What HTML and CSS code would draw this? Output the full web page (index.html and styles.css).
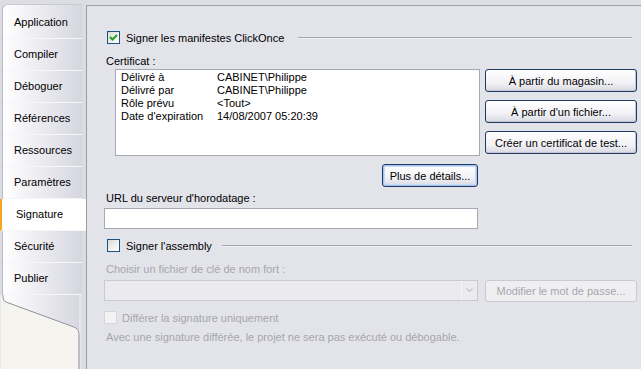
FILE: index.html
```html
<!DOCTYPE html>
<html lang="fr">
<head>
<meta charset="UTF-8">
<meta name="viewport" content="width=device-width, initial-scale=1.0">
<title>Signature</title>
<link rel="stylesheet" href="styles.css">
</head>
<body>
  <div class="window">
    <div class="sidebar">
      <ul class="tabs">
        <li>Application</li>
        <li>Compiler</li>
        <li>Déboguer</li>
        <li>Références</li>
        <li>Ressources</li>
        <li>Paramètres</li>
        <li class="active">Signature</li>
        <li>Sécurité</li>
        <li>Publier</li>
      </ul>
      <svg class="tail" width="81" height="75" viewBox="0 0 81 75">
        <defs>
          <linearGradient id="tabGrad" x1="0" x2="1" y1="0" y2="0">
            <stop offset="0" stop-color="#ffffff"/>
            <stop offset="1" stop-color="#d6d6e0"/>
          </linearGradient>
        </defs>
        <rect x="0" y="0" width="81" height="75" fill="#f5f4ef"/>
        <path d="M2 0 L80 0 L80 75 L80.5 75 L80.5 40 Q80 34 74 32 L6 7 Q2 6 2 3 Z" fill="url(#tabGrad)"/>
        <path d="M2.5 0 L2.5 3 Q2.5 6 6 7.3 L74 32.3 Q79.5 34 79.5 40 L79.5 75" fill="none" stroke="#8d8d9c" stroke-width="1"/>
      </svg>
    </div>

    <div class="panel">
      <div class="group-row first">
        <span class="check checked">
          <svg width="9" height="9" viewBox="0 0 9 9"><path d="M1 4 L3.5 6.5 L8 2" fill="none" stroke="#21a121" stroke-width="2"/></svg>
        </span>
        <span class="group-label">Signer les manifestes ClickOnce</span>
        <span class="rule"></span>
      </div>

      <div class="label cert-label">Certificat :</div>
      <div class="cert-area">
        <div class="cert-box">
          <div class="cert-row"><span class="key">Délivré à</span><span>CABINET\Philippe</span></div>
          <div class="cert-row"><span class="key">Délivré par</span><span>CABINET\Philippe</span></div>
          <div class="cert-row"><span class="key">Rôle prévu</span><span>&lt;Tout&gt;</span></div>
          <div class="cert-row"><span class="key">Date d'expiration</span><span>14/08/2007 05:20:39</span></div>
        </div>
        <div class="cert-buttons">
          <button class="btn">À partir du magasin...</button>
          <button class="btn">À partir d'un fichier...</button>
          <button class="btn">Créer un certificat de test...</button>
        </div>
      </div>

      <div class="details-row">
        <button class="btn focused details">Plus de détails...</button>
      </div>

      <div class="label url-label">URL du serveur d'horodatage :</div>
      <input class="text-input" type="text">

      <div class="group-row second">
        <span class="check"></span>
        <span class="group-label">Signer l'assembly</span>
        <span class="rule"></span>
      </div>

      <div class="label disabled key-label">Choisir un fichier de clé de nom fort :</div>
      <div class="key-row">
        <div class="combo">
          <span class="combo-arrow">
            <svg width="7" height="5" viewBox="0 0 7 5"><path d="M0.5 0.5 L3.5 3.5 L6.5 0.5" fill="none" stroke="#c4c4cc" stroke-width="1.2"/></svg>
          </span>
        </div>
        <button class="btn disabled-btn">Modifier le mot de passe...</button>
      </div>

      <div class="delay-row">
        <span class="check disabled-check"></span>
        <span class="disabled">Différer la signature uniquement</span>
      </div>
      <div class="label disabled note">Avec une signature différée, le projet ne sera pas exécuté ou débogable.</div>
    </div>
  </div>
</body>
</html>
```

FILE: styles.css
```css
body {
  margin: 0;
  font-family: "Liberation Sans", Tahoma, Arial, sans-serif;
  font-size: 11px;
  color: #000;
  background-color: #dedee5;
}

.window {
  display: flex;
  width: 641px;
  height: 369px;
  overflow: hidden;
}

.sidebar {
  width: 86px;
  flex-shrink: 0;
  display: flex;
  flex-direction: column;
  background-color: #dcdce3;
}

.tabs {
  list-style: none;
  margin: 4px 0 0 2px;
  padding: 2px 0 0 0;
  width: 79px;
  border-left: 1px solid #b9b9c6;
  border-top: 1px solid #c8c8d2;
  border-top-left-radius: 6px;
  background: linear-gradient(to right, #ffffff, #d6d6e0);
}

.tabs li {
  height: 31px;
  line-height: 31px;
  padding-left: 11px;
  border-bottom: 1px solid #f6f6fa;
}

.tabs li.active {
  background-color: #fff;
  margin-left: -3px;
  margin-right: -5px;
  padding-left: 14px;
  border-left: 2px solid #f5a623;
}

.tail {
  display: block;
}

.panel {
  width: 555px;
  min-width: 0;
  box-sizing: border-box;
  margin-top: 5px;
  border-top: 1px solid #9c9cab;
  border-left: 1px solid #9c9cab;
  background-color: #e3e3ea;
  padding: 0 4px 0 17px;
}

.group-row {
  display: flex;
  align-items: center;
  height: 13px;
}

.group-row.first {
  margin-top: 25px;
  padding-left: 3px;
}

.group-row.second {
  margin-top: 10px;
  padding-left: 3px;
}

.check {
  width: 11px;
  height: 11px;
  border: 1px solid #1c5180;
  background: linear-gradient(135deg, #dcdcd6, #ffffff);
  display: inline-flex;
  align-items: center;
  justify-content: center;
  flex-shrink: 0;
}

.group-label {
  margin-left: 6px;
  white-space: nowrap;
}

.rule {
  flex: 1;
  height: 0;
  border-top: 1px solid #a3a3b0;
  border-bottom: 1px solid #f4f4f8;
  margin-left: 14px;
  margin-right: 5px;
}

.group-row.second .rule {
  margin-left: 10px;
}

.label {
  padding-left: 2px;
  white-space: nowrap;
}

.cert-label {
  margin-top: 11px;
  line-height: 13px;
}

.cert-area {
  display: flex;
  margin-top: 1px;
}

.cert-box {
  width: 365px;
  height: 87px;
  flex-shrink: 0;
  margin-left: 11px;
  border: 1px solid #a6a9b3;
  background-color: #fff;
  padding: 1px 0 0 5px;
  box-sizing: border-box;
}

.cert-row {
  display: flex;
  line-height: 13px;
}

.cert-row .key {
  width: 96px;
}

.cert-buttons {
  display: flex;
  flex-direction: column;
  flex-shrink: 0;
  gap: 8px;
  margin-left: 5px;
}

.btn {
  font-family: inherit;
  font-size: 11px;
  color: #000;
  height: 23px;
  width: 152px;
  flex-shrink: 0;
  padding: 0;
  border: 1px solid #1f3b64;
  border-radius: 3px;
  background: linear-gradient(to bottom, #ffffff 0%, #f2f2f6 60%, #d8d8e2 100%);
  box-shadow: inset -1px -1px 0 #c6c6d2;
}

.btn.focused {
  box-shadow: inset 0 0 0 1px #a8c4f0, inset 0 0 0 2px #c9daf6;
}

.details-row {
  display: flex;
  justify-content: flex-end;
  width: 374px;
  margin-top: 8px;
}

.btn.details {
  width: 96px;
}

.url-label {
  margin-top: 5px;
  line-height: 13px;
}

.text-input {
  display: block;
  width: 374px;
  height: 21px;
  box-sizing: border-box;
  margin: 3px 0 0 0;
  border: 1px solid #a6a9b3;
  background-color: #fff;
}

.key-label {
  margin-top: 11px;
  line-height: 13px;
}

.disabled {
  color: #a7a6ad;
}

.key-row {
  display: flex;
  margin-top: 4px;
}

.combo {
  width: 374px;
  height: 21px;
  box-sizing: border-box;
  border: 1px solid #c9c9d0;
  background-color: #ebebef;
  display: flex;
  justify-content: flex-end;
  flex-shrink: 0;
}

.combo-arrow {
  width: 15px;
  border-left: 1px solid #f6f6f8;
  display: flex;
  align-items: center;
  justify-content: center;
}

.disabled-btn {
  margin-left: 7px;
  width: 152px;
  height: 22px;
  border-color: #cacad2;
  color: #a7a6ad;
  background: #efeff2;
  box-shadow: none;
}

.delay-row {
  display: flex;
  align-items: center;
  gap: 5px;
  margin-top: 9px;
  height: 13px;
}

.disabled-check {
  border-color: #d6d6dc;
  background: #f3f3f5;
}

.note {
  margin-top: 7px;
  line-height: 13px;
}
```
